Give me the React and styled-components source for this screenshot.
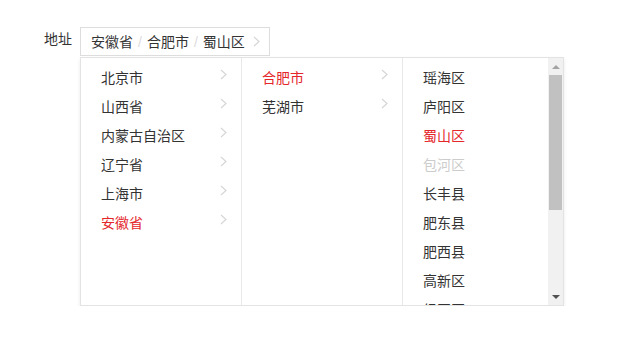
import React from "react";
import styled, { createGlobalStyle } from "styled-components";

const GlobalStyle = createGlobalStyle`
  html, body {
    margin: 0;
    padding: 0;
    background: #fff;
  }
  body {
    font-family: "Noto Sans CJK SC", "Noto Sans", sans-serif;
    font-size: 14px;
    color: #333;
  }
`;

const Page = styled.div`
  display: flex;
  align-items: flex-start;
  padding: 27px 0 0 44px;
`;

const Label = styled.span`
  line-height: 22px;
  margin-right: 8px;
  color: #333;
`;

const Picker = styled.div`
  display: flex;
  flex-direction: column;
  align-items: flex-start;
`;

const Trigger = styled.div`
  display: flex;
  align-items: center;
  height: 27px;
  padding: 0 9px 0 10px;
  border: 1px solid #ddd;
  background: #fff;
  box-sizing: content-box;
`;

const Crumb = styled.span`
  line-height: 27px;
`;

const Slash = styled.span`
  color: #ddd;
  margin: 0 5px;
  font-family: "Liberation Sans", sans-serif;
`;

const TriggerArrow = styled.span`
  display: flex;
  margin-left: 8px;
  margin-top: -1px;
`;

const Panel = styled.div`
  display: flex;
  margin-top: 1px;
  height: 247px;
  border: 1px solid #e3e3e3;
  background: #fff;
  box-shadow: 0 2px 4px rgba(0, 0, 0, 0.08);
`;

const Column = styled.div`
  display: flex;
  width: 160px;
  border-left: ${({ first }) => (first ? "none" : "1px solid #e8e8e8")};
  overflow: hidden;
`;

const List = styled.ul`
  flex: 1;
  margin: 0;
  padding: 5px 0 0;
  list-style: none;
  overflow: hidden;
`;

const Item = styled.li`
  display: flex;
  align-items: center;
  justify-content: space-between;
  height: 29px;
  line-height: 29px;
  padding: 0 14px 0 20px;
  color: ${({ active, disabled }) =>
    active ? "#e4262b" : disabled ? "#ccc" : "#333"};
  white-space: nowrap;
`;

const Chevron = styled.span`
  display: flex;
  margin-top: -6px;
`;

const Scrollbar = styled.div`
  display: flex;
  flex-direction: column;
  width: 15px;
  background: #f1f1f1;
`;

const ScrollButton = styled.div`
  height: 17px;
  display: flex;
  align-items: center;
  justify-content: center;
  &::after {
    content: "";
    width: 0;
    height: 0;
    border-left: 4px solid transparent;
    border-right: 4px solid transparent;
    ${({ down }) =>
      down
        ? "border-top: 4px solid #505050;"
        : "border-bottom: 4px solid #a3a3a3;"}
  }
`;

const Track = styled.div`
  flex: 1;
  padding: 0 1px;
`;

const Thumb = styled.div`
  height: 135px;
  background: #c1c1c1;
`;

const Arrow = ({ color = "#d6d6d6" }) => (
  <svg width="7" height="11" viewBox="0 0 7 11">
    <polyline
      points="1,1 6,5.5 1,10"
      fill="none"
      stroke={color}
      strokeWidth="1.2"
    />
  </svg>
);

const provinces = ["北京市", "山西省", "内蒙古自治区", "辽宁省", "上海市", "安徽省"];
const cities = ["合肥市", "芜湖市"];
const districts = [
  "瑶海区",
  "庐阳区",
  "蜀山区",
  "包河区",
  "长丰县",
  "肥东县",
  "肥西县",
  "高新区",
  "经开区",
];

const App = () => {
  return (
    <Page>
      <GlobalStyle />
      <Label>地址</Label>
      <Picker>
        <Trigger>
          <Crumb>安徽省</Crumb>
          <Slash>/</Slash>
          <Crumb>合肥市</Crumb>
          <Slash>/</Slash>
          <Crumb>蜀山区</Crumb>
          <TriggerArrow>
            <Arrow />
          </TriggerArrow>
        </Trigger>
        <Panel>
          <Column first>
            <List>
              {provinces.map(p => (
                <Item key={p} active={p === "安徽省"}>
                  {p}
                  <Chevron>
                    <Arrow />
                  </Chevron>
                </Item>
              ))}
            </List>
          </Column>
          <Column>
            <List>
              {cities.map(c => (
                <Item key={c} active={c === "合肥市"}>
                  {c}
                  <Chevron>
                    <Arrow />
                  </Chevron>
                </Item>
              ))}
            </List>
          </Column>
          <Column>
            <List>
              {districts.map(d => (
                <Item key={d} active={d === "蜀山区"} disabled={d === "包河区"}>
                  {d}
                </Item>
              ))}
            </List>
            <Scrollbar>
              <ScrollButton />
              <Track>
                <Thumb />
              </Track>
              <ScrollButton down />
            </Scrollbar>
          </Column>
        </Panel>
      </Picker>
    </Page>
  );
};

export default App;
